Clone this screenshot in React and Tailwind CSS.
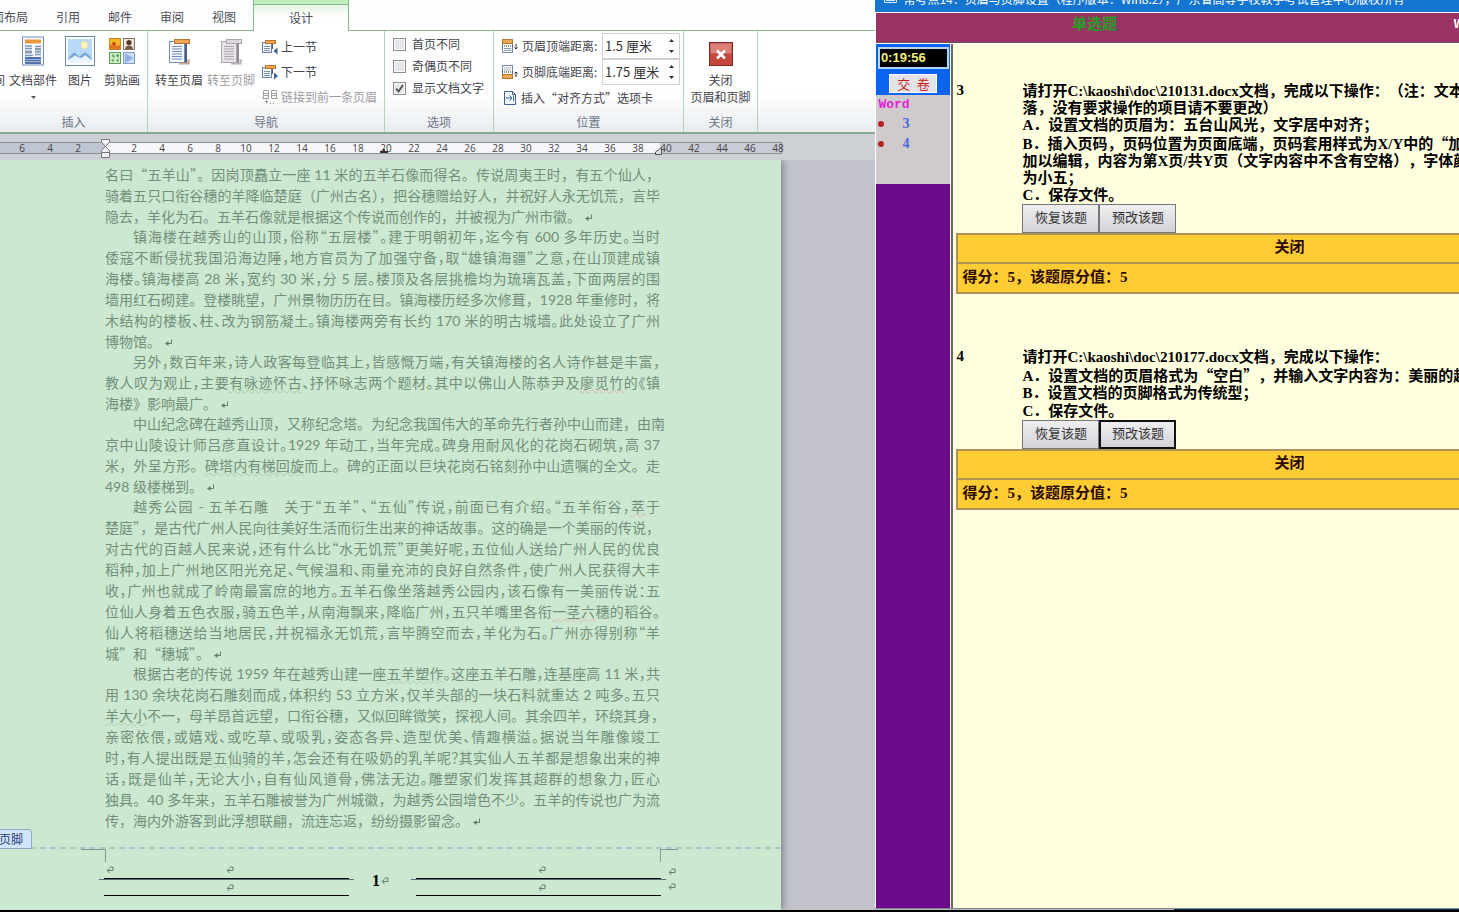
const numerosRegle = ['6', '4', '2', '', '2', '4', '6', '8', '10', '12', '14', '16', '18', '20', '22', '24', '26', '28', '30', '32', '34', '36', '38', '40', '42', '44', '46', '48']

const questions = [
  {
    id: 3,
    lignes: [
      { texte: '请打开C:\\kaoshi\\doc\\210131.docx文档，完成以下操作：（注：文本中' },
      { texte: '落，没有要求操作的项目请不要更改）', court: true },
      { texte: 'A．设置文档的页眉为：五台山风光，文字居中对齐；' },
      { texte: 'B．插入页码，页码位置为页面底端，页码套用样式为X/Y中的“加' },
      { texte: '加以编辑，内容为第X页/共Y页（文字内容中不含有空格），字体颜' },
      { texte: '为小五；', court: true },
      { texte: 'C．保存文件。' },
    ],
    actif: false,
  },
  {
    id: 4,
    lignes: [
      { texte: '请打开C:\\kaoshi\\doc\\210177.docx文档，完成以下操作：' },
      { texte: 'A．设置文档的页眉格式为“空白”，并输入文字内容为：美丽的越' },
      { texte: 'B．设置文档的页脚格式为传统型；' },
      { texte: 'C．保存文件。' },
    ],
    actif: true,
  },
]

// les guillemets chinois prennent une pleine chasse, pas celle de la police latine
const Texte = ({ children }) =>
  children.split(/([“”])/).map((t, i) =>
    t === '“' || t === '”' ? <span key={i} className="font-['Noto_Sans_CJK_SC',sans-serif]">{t}</span> : t
  )

// ligne pleine : ponctuation en demi-chasse
const Serre = ({ children }) => <span className="[font-feature-settings:'halt']">{children}</span>

/* SOULIGNEMENTS DU CORRECTEUR */
const Gram = ({ children }) => (
  <span className="underline decoration-wavy decoration-1 decoration-[#a3cfab] underline-offset-1">{children}</span>
)
const Orth = ({ children }) => (
  <span className="underline decoration-wavy decoration-1 decoration-[#e3b3a3] underline-offset-1">{children}</span>
)

const paragraphes = [
  {
    suite: true,
    lignes: [
      <Texte>名曰“五羊山”。因岗顶矗立一座 11 米的五羊石像而得名。传说周夷王时，有五个仙人，</Texte>,
      '骑着五只口衔谷穗的羊降临楚庭（广州古名），把谷穗赠给好人，并祝好人永无饥荒，言毕',
      '隐去，羊化为石。五羊石像就是根据这个传说而创作的，并被视为广州市徽。',
    ],
  },
  {
    lignes: [
      <Serre><Texte>镇海楼在越秀山的山顶，俗称“五层楼”。建于明朝初年，迄今有 600 多年历史。当时</Texte></Serre>,
      <Serre><Texte>倭寇不断侵扰我国沿海边陲，地方官员为了加强守备，取“雄镇海疆”之意，在山顶建成镇</Texte></Serre>,
      <Serre>海楼。镇海楼高 28 米，宽约 30 米，分 5 层。楼顶及各层挑檐均为琉璃瓦盖，下面两层的围</Serre>,
      '墙用红石砌建。登楼眺望，广州景物历历在目。镇海楼历经多次修葺，1928 年重修时，将',
      <Serre>木结构的楼板、柱、改为钢筋凝土。镇海楼两旁有长约 170 米的明古城墙。此处设立了广州</Serre>,
      '博物馆。',
    ],
  },
  {
    lignes: [
      <Serre>另外，数百年来，诗人政客每登临其上，皆感慨万端，有关镇海楼的名人诗作甚是丰富，</Serre>,
      <Serre>教人叹为观止，主要<Gram>有咏迹怀古</Gram>、抒怀咏志两个题材。其中以佛山人陈恭尹及<Orth>廖觅竹</Orth>的《镇</Serre>,
      '海楼》影响最广。',
    ],
  },
  {
    lignes: [
      '中山纪念碑在越秀山顶，又称纪念塔。为纪念我国伟大的革命先行者孙中山而建，由南',
      <Serre>京中山陵设计师吕彦直设计。1929 年动工，当年完成。碑身用耐风化的花岗石砌筑，高 37</Serre>,
      <>米，外呈方形。<Gram>碑塔内有梯回旋</Gram>而上。碑的正面以巨块花岗石铭刻孙中山遗嘱的全文。走</>,
      '498 级楼梯到。',
    ],
  },
  {
    lignes: [
      <Serre><Texte>越秀公园 - 五羊石雕　关于“五羊”、“五仙”传说，前面已有介绍。“五羊衔谷，</Texte><Orth>萃</Orth>于</Serre>,
      <Texte>楚庭”，是古代广州人民向往美好生活而衍生出来的神话故事。这的确是一个美丽的传说，</Texte>,
      <Serre><Texte>对古代的百越人民来说，还有什么比“水无饥荒”更美好呢，五位仙人送给广州人民的优良</Texte></Serre>,
      <Serre>稻种，加上广州地区阳光充足、气候温和、雨量充沛的良好自然条件，使广州人民获得大丰</Serre>,
      <Serre>收，广州也就成了岭南最富庶的地方。五羊石像坐落越秀公园内，该石像有一美丽传说：五</Serre>,
      <Serre>位仙人身着五色衣服，骑五色羊，从南海飘来，降临广州，五只羊嘴里各衔<Orth>一茎六</Orth>穗的稻谷。</Serre>,
      <Serre><Texte>仙人将稻穗送给当地居民，并祝福永无饥荒，言毕腾空而去，羊化为石。广州亦得别称“羊</Texte></Serre>,
      <Texte>城”和“穗城”。</Texte>,
    ],
  },
  {
    lignes: [
      <Serre>根据古老的传说 1959 年在越秀山建一座<Gram>五羊塑作</Gram>。这座五羊石雕，连基座高 11 米，共</Serre>,
      <Serre>用 130 余块花岗石雕刻而成，体积约 53 立方米，仅羊头部的一块石料就重达 2 吨多。五只</Serre>,
      <><Gram>羊大小</Gram>不一，母羊昂首远望，口衔谷穗，又似回眸微笑，探视人间。其余四羊，环绕其身，</>,
      <Serre>亲密依偎，或嬉戏、或吃草、或吸乳，姿态各异、造型优美、情趣横溢。据说当年雕像竣工</Serre>,
      <Serre>时，有人提出既是<Gram>五仙骑的</Gram>羊，怎会还有在吸奶的乳羊呢？其实仙人五羊都是想象出来的神</Serre>,
      <Serre>话，既是仙羊，无论大小，自有仙风道骨，佛法无边。雕塑家们发挥其超群的想象力，匠心</Serre>,
      '独具。40 多年来，五羊石雕被誉为广州城徽，为越秀公园增色不少。五羊的传说也广为流',
      '传，海内外游客到此浮想联翩，流连忘返，纷纷摄影留念。',
    ],
  },
]

/* ICONES */
function MarqueFin() {
  return (
    <svg className="inline-block w-2 h-2 ml-1" viewBox="0 0 8 8" aria-hidden="true">
      <path d="M6.5 0.5V4.5H2" fill="none" stroke="#5f7d69" />
      <path d="M0 4.5L3.5 2V7Z" fill="#5f7d69" />
    </svg>
  )
}

function MarqueCellule() {
  return (
    <svg className="w-2 h-2 shrink-0" viewBox="0 0 8 8" aria-hidden="true">
      <path d="M3.5 1H7V4.5H2M3.5 2.5L1 4.5L3.5 7" fill="none" stroke="#5f7d69" />
    </svg>
  )
}

function IconeBlocs() {
  return (
    <svg className="w-6 h-[30px]" viewBox="0 0 24 30" aria-hidden="true">
      <rect x="1.5" y="1" width="21" height="28" fill="#fbfcff" stroke="#6f8cb5" />
      <rect x="4" y="3.5" width="16" height="4" fill="#e8973a" />
      <path d="M4 10H11M4 12.5H11M14 10.5H20M4 19.5H12M14 16H20M14 18.5H20" stroke="#7a93bd" strokeWidth="1.4" />
      <rect x="4" y="14.5" width="7" height="3" fill="#8d99ad" />
      <rect x="14" y="12" width="6" height="2.5" fill="#8d99ad" />
      <path d="M4 22H20M4 24.5H20" stroke="#4a6fae" strokeWidth="1.8" />
      <path d="M4 27H20" stroke="#2b4f93" strokeWidth="1.6" />
    </svg>
  )
}

function IconeImage() {
  return (
    <svg className="w-[30px] h-[30px]" viewBox="0 0 30 30" aria-hidden="true">
      <rect x="0.5" y="0.5" width="29" height="29" fill="#fff" stroke="#6b86a8" />
      <rect x="3" y="3" width="24" height="24" fill="#b5d9f7" />
      <path d="M3 23C5 20 7 19 9 16.5C11 17 12 19 14 21C16 19 18 18 20 16.5C23 18 25 21 27 23V24H3Z" fill="#6f9fd6" />
      <path d="M3 24C6 21 8 22 10 19C13 22 17 23 20 19C23 21 25 23 27 24V27H3Z" fill="#e8f4ff" />
      <circle cx="19.5" cy="9" r="3.5" fill="#fff6c9" stroke="#f6dc8b" />
    </svg>
  )
}

function IconeClipart() {
  return (
    <svg className="w-[26px] h-[30px]" viewBox="0 0 26 30" aria-hidden="true">
      <rect x="0.5" y="2.5" width="11" height="11" fill="#f6b722" stroke="#b98a2a" />
      <path d="M1 9L5 8L8 10L11 9V13H1Z" fill="#e8731f" />
      <circle cx="5" cy="7.5" r="1.6" fill="#b63a17" />
      <rect x="14.5" y="2.5" width="11" height="11" fill="#f2e7d8" stroke="#7e7468" />
      <circle cx="20" cy="6.5" r="2.6" fill="#54392c" />
      <path d="M16 13C16.5 10 18 9.5 20 9.5C22 9.5 23.5 10 24 13Z" fill="#7d5744" />
      <rect x="0.5" y="16.5" width="11" height="11" fill="#d2ecc4" stroke="#5d9a63" />
      <path d="M3 18L6 20L4 22ZM7 19L10 18L9 22ZM2 24L5 23L4 26ZM7 24L10 23L9 26Z" fill="#3f9a4d" />
      <rect x="14.5" y="16.5" width="11" height="11" fill="#cfe0f6" stroke="#7e9dca" />
      <path d="M16 17.5V27L25 22Z" fill="#8fb0e4" />
    </svg>
  )
}

function IconeEnTete({ gris }) {
  const trait = gris ? '#aaa4ab' : '#6c8bbb'
  return (
    <svg className="w-6 h-[30px]" viewBox="0 0 24 30" aria-hidden="true">
      <rect x="2.5" y="5.5" width="15" height="21" fill={gris ? '#e9e4ea' : '#f4f8ff'} stroke={trait} />
      <path d="M5 10.5H15M5 13H15M5 15.5H15M5 18H15M5 20.5H15M5 23H15" stroke={trait} />
      <rect x="7.5" y="3.5" width="15" height="4" fill={gris ? '#dcd7dd' : '#f2a553'} stroke={gris ? '#aaa4ab' : '#b8762f'} />
      <path d="M19 8V27" stroke={gris ? '#8f8a90' : '#4e5f7c'} strokeWidth="2" />
      <path d="M12 27.5H21.5V24.5H23" fill="none" stroke={gris ? '#b8b3b9' : '#c7a18a'} strokeWidth="2" />
    </svg>
  )
}

function IconeSection({ suivante }) {
  return (
    <svg className="w-4 h-4 shrink-0" viewBox="0 0 16 16" aria-hidden="true">
      <rect x="0.5" y="3.5" width="9" height="10" fill="#f4f8ff" stroke="#6c7fa3" />
      <path d="M2 7.5H8M2 9.5H8M2 11.5H8" stroke="#7b90b5" />
      <rect x="3.5" y="1.5" width="10" height="3" fill="#f2a553" stroke="#b8762f" />
      <path d="M10.5 5V10" stroke="#4e5f7c" />
      {suivante ? <path d="M12 8.5V15.5L16 12Z" fill="#3c5f95" /> : <path d="M15.5 8.5V15.5L11.5 12Z" fill="#3c5f95" />}
    </svg>
  )
}

function IconeLier() {
  return (
    <svg className="w-4 h-4 shrink-0" viewBox="0 0 16 16" aria-hidden="true">
      <path d="M1.5 1.5H6.5V9.5H1.5ZM9.5 1.5H14.5V9.5H9.5ZM2 4.5H6M2 6.5H6M10 4.5H14M10 6.5H14M0 9.5H4M12 9.5H16" fill="none" stroke="#a5a0a8" />
      <path d="M5.5 10.5L3.5 12.5L5.5 14.5M4 12.5H6M8 14.5H9M11 14.5H12" fill="none" stroke="#98939b" />
    </svg>
  )
}

function IconeDistance({ bas }) {
  return (
    <svg className="w-4 h-4 shrink-0" viewBox="0 0 16 16" aria-hidden="true">
      <rect x="0.5" y="1.5" width="10" height="13" fill="#fff" stroke="#7688a8" />
      {bas ? <rect x="0.5" y="10.5" width="10" height="4" fill="#f2a553" stroke="#b8762f" /> : <rect x="0.5" y="1.5" width="10" height="4" fill="#f2a553" stroke="#b8762f" />}
      <path d="M0 8H11" stroke="#222" strokeDasharray="1 1" />
      {bas ? <path d="M14 8V13M12.5 9.5L14 8L15.5 9.5" fill="none" stroke="#333" /> : <path d="M14 6V11M12.5 9.5L14 11L15.5 9.5" fill="none" stroke="#333" />}
      {bas ? <path d="M2 4H9M2 6H9" stroke="#aab6cc" /> : <path d="M2 10.5H9M2 12.5H9" stroke="#8598ba" />}
    </svg>
  )
}

function IconeTabulation() {
  return (
    <svg className="w-4 h-4 shrink-0" viewBox="0 0 16 16" aria-hidden="true">
      <path d="M2.5 1.5H10.5L13.5 4.5V14.5H2.5Z" fill="#f1f6ff" stroke="#40618f" />
      <path d="M10.5 1.5V4.5H13.5" fill="none" stroke="#40618f" />
      <path d="M4 8H10M7.5 5.5L10 8L7.5 10.5M11.5 5.5V11" fill="none" stroke="#3c68a8" />
    </svg>
  )
}

/* RUBAN */
function Groupe({ titre, largeur, children }) {
  return (
    <section className={`${largeur} shrink-0 flex flex-col border-r border-[#b5d3ba]`}>
      <div className="flex-1 flex">{children}</div>
      <h2 className="h-[18px] leading-4 text-center text-[#6d7288]">{titre}</h2>
    </section>
  )
}

function GrosBouton({ icone, largeur, gris, fleche, children }) {
  return (
    <button disabled={gris} className={`${largeur} shrink-0 flex flex-col items-center pt-[5px] whitespace-nowrap ${gris ? 'text-[#a09ca3]' : 'text-[#44444c]'}`}>
      {icone}
      <span className="leading-4 mt-1.5">{children}</span>
      {fleche && <svg className="w-[5px] h-[3px] mt-2" viewBox="0 0 5 3" aria-hidden="true"><path d="M0 0H5L2.5 3Z" fill="#555" /></svg>}
    </button>
  )
}

function PetitBouton({ icone, gris, children }) {
  return (
    <button disabled={gris} className={`h-[25px] flex items-center gap-[3px] whitespace-nowrap ${gris ? 'text-[#a09ca3]' : 'text-[#44444c]'}`}>
      {icone}
      {children}
    </button>
  )
}

function Case({ id, coche, children }) {
  return (
    <div className="h-[22px] flex items-center gap-[6px]">
      <span className="relative w-[13px] h-[13px]">
        <input id={id} type="checkbox" defaultChecked={coche} className="peer block appearance-none w-[13px] h-[13px] border border-[#8b8b90] bg-[#e6e6ea] shadow-[inset_0_0_0_1px_#fafafa]" />
        <svg className="absolute inset-0 hidden peer-checked:block pointer-events-none" viewBox="0 0 13 13" aria-hidden="true">
          <path d="M3 6.5L5.5 9.5L10 3" fill="none" stroke="#4c4c55" strokeWidth="1.8" />
        </svg>
      </span>
      <label htmlFor={id}>{children}</label>
    </div>
  )
}

function Distance({ id, valeur, bas, children }) {
  return (
    <div className="h-[26px] flex items-center">
      <IconeDistance bas={bas} />
      <label htmlFor={id} className="w-[84px] pl-1 shrink-0 whitespace-nowrap">{children}</label>
      <div className="flex w-[78px] h-[26px] border border-[#cfcfd4] bg-white">
        <input id={id} defaultValue={valeur} className="w-[60px] pl-[2px] text-[13px] text-[#333] outline-none" />
        <div className="flex-1 flex flex-col justify-center items-center gap-2">
          <button aria-label="+"><svg className="w-[5px] h-[3px] block" viewBox="0 0 5 3"><path d="M0 3H5L2.5 0Z" fill="#333" /></svg></button>
          <button aria-label="-"><svg className="w-[5px] h-[3px] block" viewBox="0 0 5 3"><path d="M0 0H5L2.5 3Z" fill="#333" /></svg></button>
        </div>
      </div>
    </div>
  )
}

function Ruban() {
  return (
    <header className="text-xs text-[#44444c]">
      <nav className="h-[31px] flex bg-[#fdfefd] text-[#4c4c58]">
        <a href="#mise-en-page" className="w-[42px] shrink-0 flex items-center justify-end pr-[14px] pt-1 overflow-hidden whitespace-nowrap border-b border-[#86b98a]">面布局</a>
        <a href="#references" className="w-[52px] flex items-center justify-center pt-1 border-b border-[#86b98a]">引用</a>
        <a href="#courrier" className="w-[52px] flex items-center justify-center pt-1 border-b border-[#86b98a]">邮件</a>
        <a href="#revision" className="w-[52px] flex items-center justify-center pt-1 border-b border-[#86b98a]">审阅</a>
        <a href="#affichage" className="w-[55px] flex items-center justify-center pr-[3px] pt-1 border-b border-[#86b98a]">视图</a>
        <a href="#conception" className="w-24 flex flex-col border-x border-[#86b98a]">
          <span className="h-[5px] bg-[#c3ecc0] border-b border-[#86b98a]"></span>
          <span className="flex-1 flex items-center justify-center bg-linear-to-b from-[#e4f6e3] to-white to-50%">设计</span>
        </a>
        <span className="flex-1 border-b border-[#86b98a]"></span>
      </nav>

      <div className="h-[103px] flex border-b-2 border-[#86ab91] bg-linear-to-b from-white from-60% to-[#e9edf0]">
        <Groupe titre="插入" largeur="w-[148px]">
          <button className="w-[5px] shrink-0 flex justify-end items-start pt-[41px] overflow-hidden leading-4 whitespace-nowrap">间</button>
          <GrosBouton icone={<IconeBlocs />} largeur="w-14" fleche>文档部件</GrosBouton>
          <GrosBouton icone={<IconeImage />} largeur="w-[38px]">图片</GrosBouton>
          <GrosBouton icone={<IconeClipart />} largeur="w-[46px]">剪贴画</GrosBouton>
        </Groupe>
        <Groupe titre="导航" largeur="w-[237px]">
          <div className="flex items-start pl-[5px]">
            <GrosBouton icone={<IconeEnTete />} largeur="w-[52px]">转至页眉</GrosBouton>
            <GrosBouton icone={<IconeEnTete gris />} largeur="w-[52px]" gris>转至页脚</GrosBouton>
          </div>
          <div className="pl-[5px] pt-[3px]">
            <PetitBouton icone={<IconeSection />}>上一节</PetitBouton>
            <PetitBouton icone={<IconeSection suivante />}>下一节</PetitBouton>
            <PetitBouton icone={<IconeLier />} gris>链接到前一条页眉</PetitBouton>
          </div>
        </Groupe>
        <Groupe titre="选项" largeur="w-[109px]">
          <div className="pl-2 pt-[2px]">
            <Case id="premiere">首页不同</Case>
            <Case id="paires">奇偶页不同</Case>
            <Case id="texte" coche>显示文档文字</Case>
          </div>
        </Groupe>
        <Groupe titre="位置" largeur="w-[190px]">
          <div className="pl-2 pt-[2px]">
            <Distance id="haut" valeur="1.5 厘米">页眉顶端距离:</Distance>
            <Distance id="bas" valeur="1.75 厘米" bas>页脚底端距离:</Distance>
            <PetitBouton icone={<IconeTabulation />}>插入“对齐方式”选项卡</PetitBouton>
          </div>
        </Groupe>
        <Groupe titre="关闭" largeur="w-[74px]">
          <button className="w-full flex flex-col items-center pt-[11px]">
            <svg className="w-6 h-6" viewBox="0 0 24 24" aria-hidden="true">
              <rect x="0.5" y="0.5" width="23" height="23" fill="#c4463c" stroke="#7b2a27" />
              <rect x="1.5" y="1.5" width="21" height="10" fill="#db8078" />
              <path d="M8 8.500L16 16.500M16 8.500L8 16.500" stroke="#fff" strokeWidth="2.6" />
            </svg>
            <span className="mt-[5px] leading-[17px]">关闭<br />页眉和页脚</span>
          </button>
        </Groupe>
      </div>
    </header>
  )
}

function Regle() {
  return (
    <div className="h-[26px] pt-2 bg-[#cdd1d6] overflow-hidden">
      <div className="relative w-[782px] h-3 flex pl-2 border-y border-r border-[#8b8f96] bg-[linear-gradient(to_right,#bfc5d2_105px,#f7f7fb_105px,#f7f7fb_660px,#c9cbd6_660px)] text-[10px] leading-[10px] text-[#444] font-['Open_Sans',sans-serif]">
        {numerosRegle.map((n, i) => (
          <span key={i} className="w-7 shrink-0 text-center">{n}</span>
        ))}
        {/* curseurs de retrait */}
        <svg className="absolute left-[100px] -top-1 w-[11px] h-5" viewBox="0 0 11 20" aria-hidden="true">
          <path d="M1.5 0.5H9.5V3L5.5 7.5L1.5 3ZM5.5 7.5L9.5 11.5V18.5H1.5V11.5ZM1.5 13.5H9.5" fill="#f1f1f1" stroke="#77777c" />
        </svg>
        <svg className="absolute left-[380px] top-[6px] w-2 h-1" viewBox="0 0 8 4" aria-hidden="true"><path d="M3 0H5V2H8V4H0V2H3Z" fill="#333" /></svg>
        <svg className="absolute left-[655px] top-1 w-2 h-2" viewBox="0 0 8 8" aria-hidden="true"><path d="M0.5 7.5V5L6.5 0.5V7.5Z" fill="#ddd" stroke="#555" /></svg>
      </div>
    </div>
  )
}

function CelluleLigne({ debut }) {
  return (
    <div className="w-[255px]">
      <div className="h-4 flex items-center">
        <span className="w-[7px]"></span>
        <span className="w-2">{debut && <MarqueCellule />}</span>
        <span className="flex-1 flex justify-center pr-2"><MarqueCellule /></span>
      </div>
      <div className="mx-[5px] h-px bg-black"></div>
      <div className="h-px bg-[#4f6f78]"></div>
      <div className="h-[15px] flex items-center justify-center pl-[7px]"><MarqueCellule /></div>
      <div className="mx-[5px] h-px bg-black"></div>
    </div>
  )
}

function Page() {
  return (
    <main className="w-[781px] shrink-0 bg-[#cce8d0] shadow-[2px_0_8px_#7f828c]">
      <div className="w-[660px] pl-[105px] pt-1 -space-y-px text-sm leading-[21px] text-[#738f7b] font-['Lato','Noto_Sans_CJK_SC',sans-serif]">
        {paragraphes.map((p, i) => (
          <div key={i}>
            {p.lignes.map((ligne, j) => {
              const derniere = j === p.lignes.length - 1
              return (
                <p
                  key={j}
                  className={`whitespace-nowrap h-[21px] ${derniere ? '' : '[text-align-last:justify]'} ${j === 0 && !p.suite ? 'pl-7' : ''}`}
                >
                  {ligne}
                  {derniere && <MarqueFin />}
                </p>
              )
            })}
          </div>
        ))}
      </div>

      {/* PIED DE PAGE */}
      <footer className="relative mt-4 border-t-2 border-dashed border-[#a5c9cb] pb-[14px]">
        <span className="absolute left-0 bottom-full h-5 w-8 flex justify-end items-center pr-2 overflow-hidden whitespace-nowrap rounded-tr border border-l-0 border-[#8fa9c9] bg-[#d3e5fa] text-xs text-[#1f3b73]">页脚</span>
        <div className="flex h-[13px] pl-[81px]">
          <span className="w-[25px] border-t border-r border-[#7f9c88]"></span>
          <span className="w-[554px]"></span>
          <span className="w-[18px] border-t border-l border-[#7f9c88]"></span>
        </div>
        <div className="flex pl-[99px]">
          <CelluleLigne debut />
          <div className="w-[57px] flex items-center justify-center gap-px pr-1 pt-1 text-base leading-4 font-bold text-black font-['Liberation_Serif',serif]">
            1<MarqueCellule />
          </div>
          <CelluleLigne />
          <div className="pt-[6px] pl-[2px] flex flex-col gap-[7px]">
            <MarqueCellule />
            <MarqueCellule />
          </div>
        </div>
      </footer>
    </main>
  )
}

/* FENETRE D'EXAMEN */
function Question({ id, lignes, actif }) {
  return (
    <article id={`question-${id}`} className="w-[666px] mb-[54px]">
      <div className="flex">
        <span className="w-[66px] shrink-0 leading-4">{id}</span>
        <div className="whitespace-nowrap [text-spacing-trim:space-all]">
          {lignes.map((l) => (
            <p key={l.texte} className={l.court ? 'h-4 leading-4' : 'h-[18px] leading-[18px]'}><Texte>{l.texte}</Texte></p>
          ))}
          <div className="flex text-[13px] font-normal text-[#333] font-['Noto_Sans_CJK_SC',sans-serif]">
            <button className="w-[77px] h-[29px] pb-1 border border-[#77777a] bg-linear-to-b from-[#efeff0] to-[#d4d2d8]">恢复该题</button>
            <button className={`w-[77px] h-[29px] pb-1 bg-linear-to-b from-[#efeff0] to-[#d4d2d8] ${actif ? 'border-2 border-[#111]' : 'border border-[#77777a]'}`}>预改该题</button>
          </div>
        </div>
      </div>
      <table className="w-full border-collapse border-2 border-[#ad9356] bg-[#ffcc33] text-[#2b0a00]">
        <tbody>
          <tr><th className="h-[29px] border-2 border-[#ad9356] pb-[2px] text-center">关闭</th></tr>
          <tr><td className="h-[30px] border-2 border-[#ad9356] px-1 pb-[2px]">得分：5，该题原分值：5</td></tr>
        </tbody>
      </table>
    </article>
  )
}

function Examen() {
  return (
    <div className="flex-1 min-w-0 flex flex-col overflow-hidden">
      <div className="h-3 flex items-end pl-2 gap-[5px] overflow-hidden bg-[#1475d1] text-xs leading-[26px] whitespace-nowrap text-white">
        <svg className="w-[15px] h-3 mb-2 shrink-0" viewBox="0 0 15 12" aria-hidden="true">
          <path d="M1.5 0V10.5H13.5V0M4.5 0V8M7.5 0V8M10.5 0V8M3 8.5H12" fill="none" stroke="#d6ebff" />
        </svg>
        <h1>常考点14：页眉与页脚设置（程序版本：Win8.2），广东省高等学校教学考试管理中心版权所有</h1>
      </div>

      <div className="flex-1 flex flex-col border-l border-t border-white">
        <div className="h-[30px] flex items-start overflow-hidden bg-[#993366] border-b border-[#6d5560] font-bold text-[15px] leading-5">
          <h2 className="w-[436px] shrink-0 text-center text-[#22a022]">单选题</h2>
          <span className="pl-[141px] text-xs leading-5 text-white">Word</span>
        </div>

        <div className="flex-1 flex border-t border-white">
          {/* Barre latérale */}
          <aside className="w-[74px] shrink-0 flex flex-col bg-[#6d0a8c]">
            <div className="h-[51px] flex flex-col items-center pt-[3px] bg-[#0a64f0]">
              <div className="w-[71px] h-[22px] pl-px border-2 border-[#b8d4f4] bg-black text-[#f4f078] text-[13px] leading-[18px] font-bold font-['Liberation_Sans',sans-serif]">0:19:56</div>
              <button className="w-12 h-[19px] mt-[5px] border border-white bg-[#e4e4e8] text-[13px] leading-4 text-[#cc1f1f]">{'交\u2002卷'}</button>
            </div>
            <nav className="h-[89px] px-[2px] bg-[#cfcbcc] font-bold">
              <h3 className="text-[13px] leading-[19px] text-[#e321d9] font-['Liberation_Mono',monospace]">Word</h3>
              {questions.map((q) => (
                <a key={q.id} href={`#question-${q.id}`} className="flex items-center h-5 text-sm text-[#4a66dd] font-['Liberation_Serif',serif]">
                  <span className="w-[6px] h-[6px] rounded-full bg-[#b82020]"></span>
                  <span className="pl-[18px]">{q.id}</span>
                </a>
              ))}
            </nav>
          </aside>
          <div className="w-[3px] shrink-0 border-l border-white bg-[#6b666b]"></div>

          {/* Questions */}
          <div className="flex-1 min-w-0 overflow-hidden pt-[38px] pl-[3px] bg-[#ffffdf] font-bold text-[15px] text-black font-['Liberation_Serif','Noto_Sans_CJK_SC',serif]">
            {questions.map((q) => (
              <Question key={q.id} {...q} />
            ))}
          </div>
        </div>
      </div>

      <div className="h-[2px] flex border-t border-[#7d8a8f]">
        <span className="w-[299px] bg-[#b4bcc0]"></span>
        <span className="flex-1 bg-[#0d2a5c]"></span>
      </div>
    </div>
  )
}

export default function App() {
  return (
    <div className="min-h-screen flex flex-col overflow-hidden font-['Noto_Sans_CJK_SC',sans-serif]">
      <div className="flex-1 flex">
        <div className="w-3/5 shrink-0 flex flex-col overflow-hidden">
          <Ruban />
          <Regle />
          <div className="flex-1 flex overflow-hidden bg-[#c3c4cb]">
            <Page />
          </div>
        </div>
        <Examen />
      </div>
      <div className="h-[2px] bg-black"></div>
    </div>
  )
}
